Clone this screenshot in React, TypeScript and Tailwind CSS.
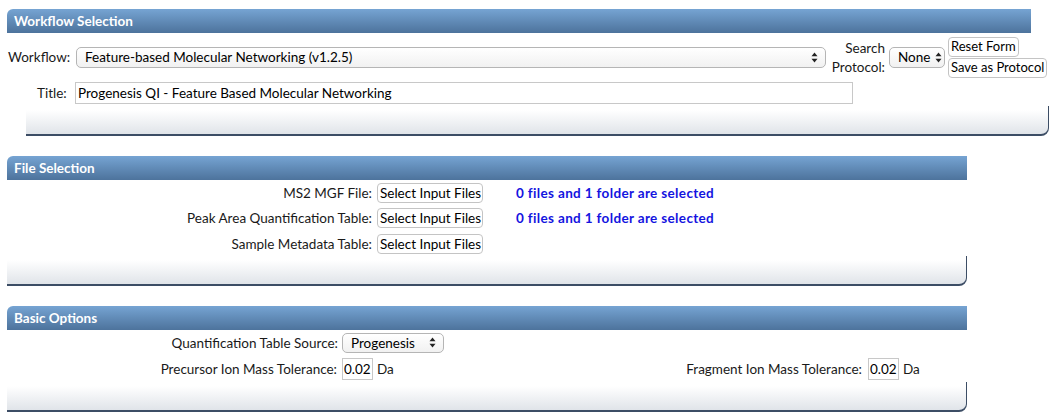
import React from "react";

const font = { fontFamily: '"Lato", "Open Sans", sans-serif' };

function Arrows() {
  return (
    <svg width="7" height="11" viewBox="0 0 7 11" className="shrink-0">
      <path d="M3.5 0.5 L6.5 4.2 L0.5 4.2 Z" fill="#222" />
      <path d="M3.5 10.5 L6.5 6.8 L0.5 6.8 Z" fill="#222" />
    </svg>
  );
}

function FakeSelect({ text, className }: { text: string; className: string }) {
  return (
    <div
      className={`flex items-center justify-between gap-[5px] rounded-[5px] border border-[#b5b5b5] bg-gradient-to-b from-white to-[#f1f1f1] pl-[8px] pr-[7px] text-black ${className}`}
    >
      <span className="whitespace-nowrap">{text}</span>
      <Arrows />
    </div>
  );
}

function Btn({ children, className = "" }: { children: React.ReactNode; className?: string }) {
  return (
    <div
      className={`flex h-[20px] items-center whitespace-nowrap rounded-[4px] border border-[#c4c4c4] bg-white px-[2px] text-black ${className}`}
    >
      {children}
    </div>
  );
}

function Header({ title, className }: { title: string; className: string }) {
  return (
    <div
      className={`flex h-[24px] items-center rounded-tl-[6px] bg-gradient-to-b from-[#76a4d3] to-[#4d739c] pl-[7px] font-bold text-white ${className}`}
    >
      {title}
    </div>
  );
}

function Footer({ className }: { className: string }) {
  return (
    <div
      className={`h-[30px] rounded-br-[8px] border-r border-b-2 border-[#3c4d65] bg-gradient-to-b from-white from-[15%] to-[#e0e4e9] ${className}`}
    />
  );
}

export default function App() {
  return (
    <div className="h-[418px] w-[1056px] overflow-hidden bg-white pt-[9px] text-[13.5px] text-[#1a1a1a]" style={font}>
      {/* Workflow Selection */}
      <div>
        <Header title="Workflow Selection" className="ml-[7px] w-[1024px]" />
        <div className="mt-[4px] flex items-center">
          <span className="ml-[8px] w-[68px]">Workflow:</span>
          <FakeSelect text="Feature-based Molecular Networking (v1.2.5)" className="h-[21px] w-[750px]" />
          <div className="ml-[2px] w-[57px] text-right leading-[19px]">
            Search
            <br />
            Protocol:
          </div>
          <FakeSelect text="None" className="ml-[4px] h-[21px] w-[56px] pl-[7px] pr-[5px]" />
          <div className="ml-[3px] flex flex-col items-start gap-[1px] text-[13px]">
            <Btn className="px-[1px]">Reset Form</Btn>
            <Btn className="px-[1px]">Save as Protocol</Btn>
          </div>
        </div>
        <div className="mt-[4px] flex items-center">
          <span className="ml-[37px] w-[38px]">Title:</span>
          <div className="flex h-[22px] w-[778px] items-center border border-[#c8c8c8] pl-[2px] text-black">
            Progenesis QI - Feature Based Molecular Networking
          </div>
        </div>
        <Footer className="mt-[2px] ml-[26px] w-[1023px]" />
      </div>

      {/* File Selection */}
      <div className="mt-[20px]">
        <Header title="File Selection" className="ml-[7px] w-[960px]" />
        <div className="flex flex-col gap-[5px] pt-[3px]">
          {[
            ["MS2 MGF File:", true],
            ["Peak Area Quantification Table:", true],
            ["Sample Metadata Table:", false],
          ].map(([label, sel]) => (
            <div key={label as string} className="flex items-center">
              <span className="w-[373px] pr-[1px] text-right">{label}</span>
              <Btn className="ml-[4px] w-[106px]">Select Input Files</Btn>
              {sel ? (
                <span className="ml-[33px] font-bold tracking-[0.35px] text-[#1414e0]">
                  0 files and 1 folder are selected
                </span>
              ) : null}
            </div>
          ))}
        </div>
        <Footer className="mt-[2px] ml-[7px] w-[960px]" />
      </div>

      {/* Basic Options */}
      <div className="mt-[20px]">
        <Header title="Basic Options" className="ml-[7px] w-[960px]" />
        <div className="flex items-center pt-[3px]">
          <span className="w-[338px] text-right">Quantification Table Source:</span>
          <FakeSelect text="Progenesis" className="ml-[4px] h-[20px] w-[102px] pl-[8px]" />
        </div>
        <div className="mt-[5px] flex items-center">
          <span className="w-[337px] text-right">Precursor Ion Mass Tolerance:</span>
          <div className="ml-[5px] flex h-[22px] w-[31px] items-center border border-[#c8c8c8] pl-[1px] text-black">0.02</div>
          <span className="ml-[4px] w-[20px]">Da</span>
          <span className="w-[465px] text-right">Fragment Ion Mass Tolerance:</span>
          <div className="ml-[6px] flex h-[22px] w-[31px] items-center border border-[#c8c8c8] pl-[1px] text-black">0.02</div>
          <span className="ml-[4px]">Da</span>
        </div>
        <Footer className="mt-[2px] ml-[7px] w-[960px]" />
      </div>
    </div>
  );
}
